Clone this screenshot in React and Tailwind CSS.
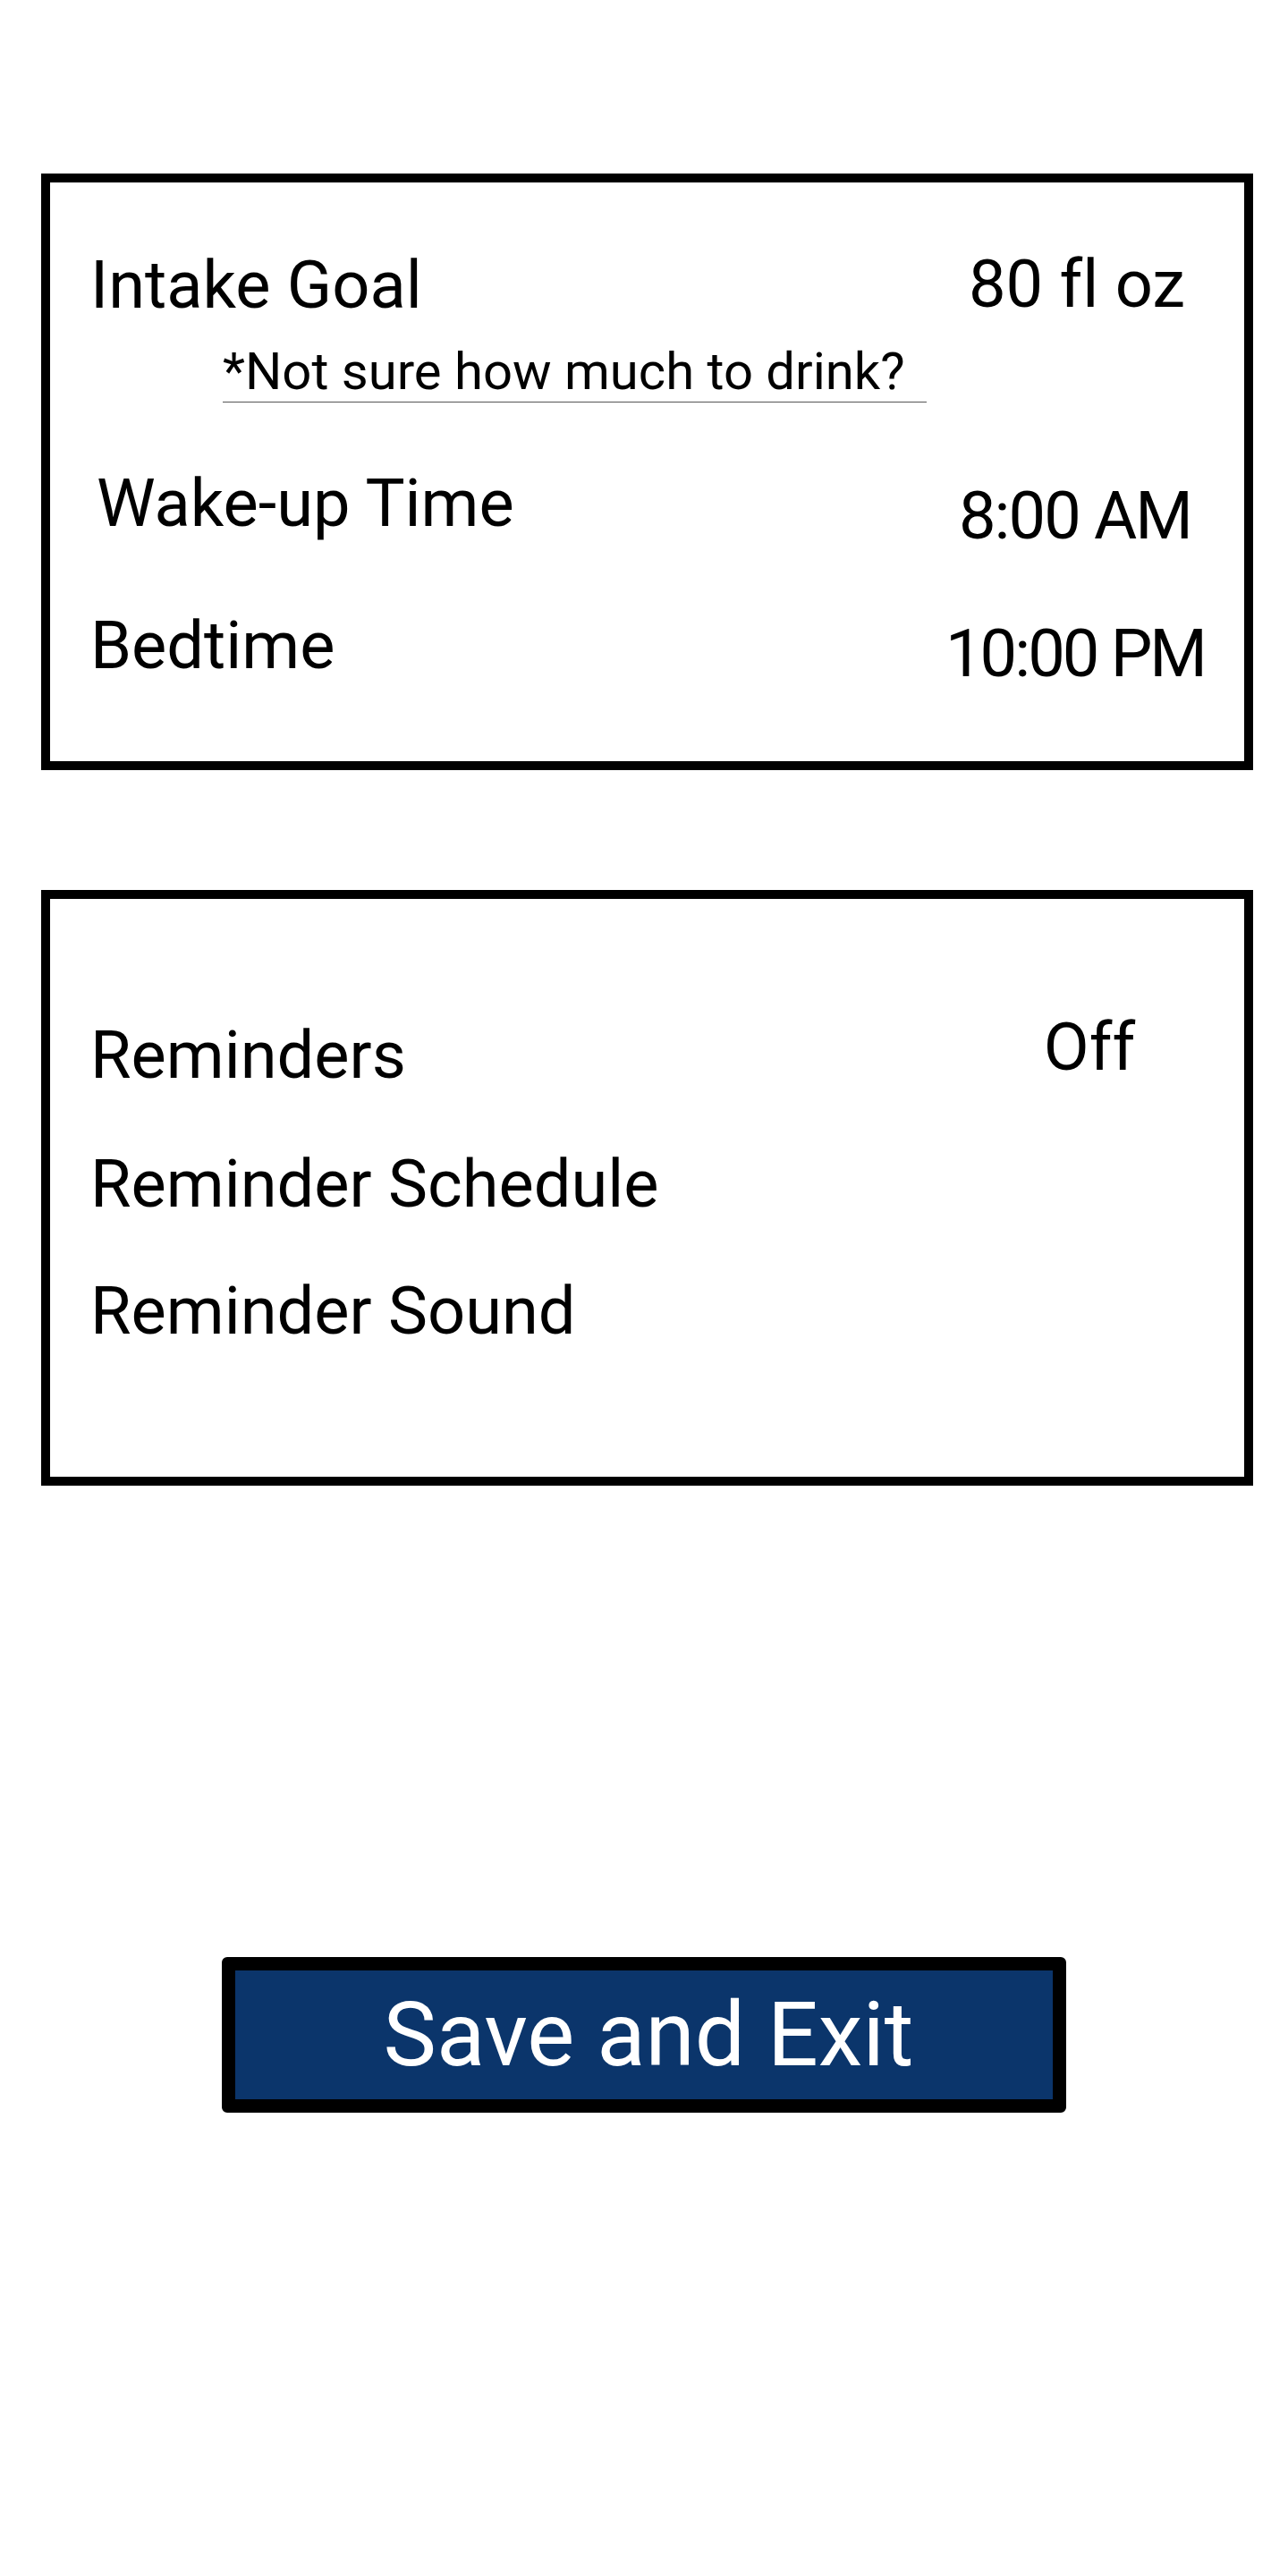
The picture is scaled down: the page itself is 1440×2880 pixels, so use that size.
import React from "react";

export default function App() {
  return (
    <div className="w-[1440px] min-h-[2880px] bg-white text-black font-['Roboto','Liberation_Sans',sans-serif] [font-variant-ligatures:none] pt-[194px]">
      {/* Box 1 */}
      <div className="ml-[46px] w-[1355px] h-[667px] border-[10px] border-black pt-[78px] pl-[45px] pr-[39px]">
        <div className="flex justify-between items-start">
          <div className="text-[74px] leading-none whitespace-nowrap">Intake Goal</div>
          <div className="w-[300px] text-center text-[74px] leading-none whitespace-nowrap -mt-[1px] pl-[4px]">80 fl oz</div>
        </div>
        <div className="mt-[30px] ml-[148px] w-[787px] border-b border-[#555] pb-[5px] text-[58px] leading-none whitespace-nowrap">
          *Not sure how much to drink?
        </div>
        <div className="mt-[76px] flex justify-between items-start">
          <div className="text-[74px] leading-none whitespace-nowrap ml-[7px]">Wake-up Time</div>
          <div className="w-[300px] text-center text-[74px] leading-none whitespace-nowrap tracking-[-2px] mt-[14px]">8:00 AM</div>
        </div>
        <div className="mt-[71px] flex justify-between items-start">
          <div className="text-[74px] leading-none whitespace-nowrap">Bedtime</div>
          <div className="w-[300px] text-center text-[74px] leading-none whitespace-nowrap tracking-[-3px] mt-[9px] -ml-[8px]">10:00 PM</div>
        </div>
      </div>

      {/* Box 2 */}
      <div className="mt-[134px] ml-[46px] w-[1355px] h-[666px] border-[10px] border-black pt-[129px] pl-[45px] pr-[23px]">
        <div className="flex justify-between items-start">
          <div className="text-[74px] leading-none whitespace-nowrap mt-[9px]">Reminders</div>
          <div className="w-[300px] text-center text-[74px] leading-none whitespace-nowrap">Off</div>
        </div>
        <div className="mt-[70px] text-[74px] leading-none whitespace-nowrap">Reminder Schedule</div>
        <div className="mt-[68px] text-[74px] leading-none whitespace-nowrap">Reminder Sound</div>
      </div>

      {/* Button */}
      <div className="mt-[527px] flex justify-center">
        <button className="w-[944px] h-[174px] border-[15px] border-black rounded-md bg-[#0b356b] text-white text-[100px] leading-none whitespace-nowrap flex items-center justify-center pl-[10px]">
          Save and Exit
        </button>
      </div>
    </div>
  );
}
